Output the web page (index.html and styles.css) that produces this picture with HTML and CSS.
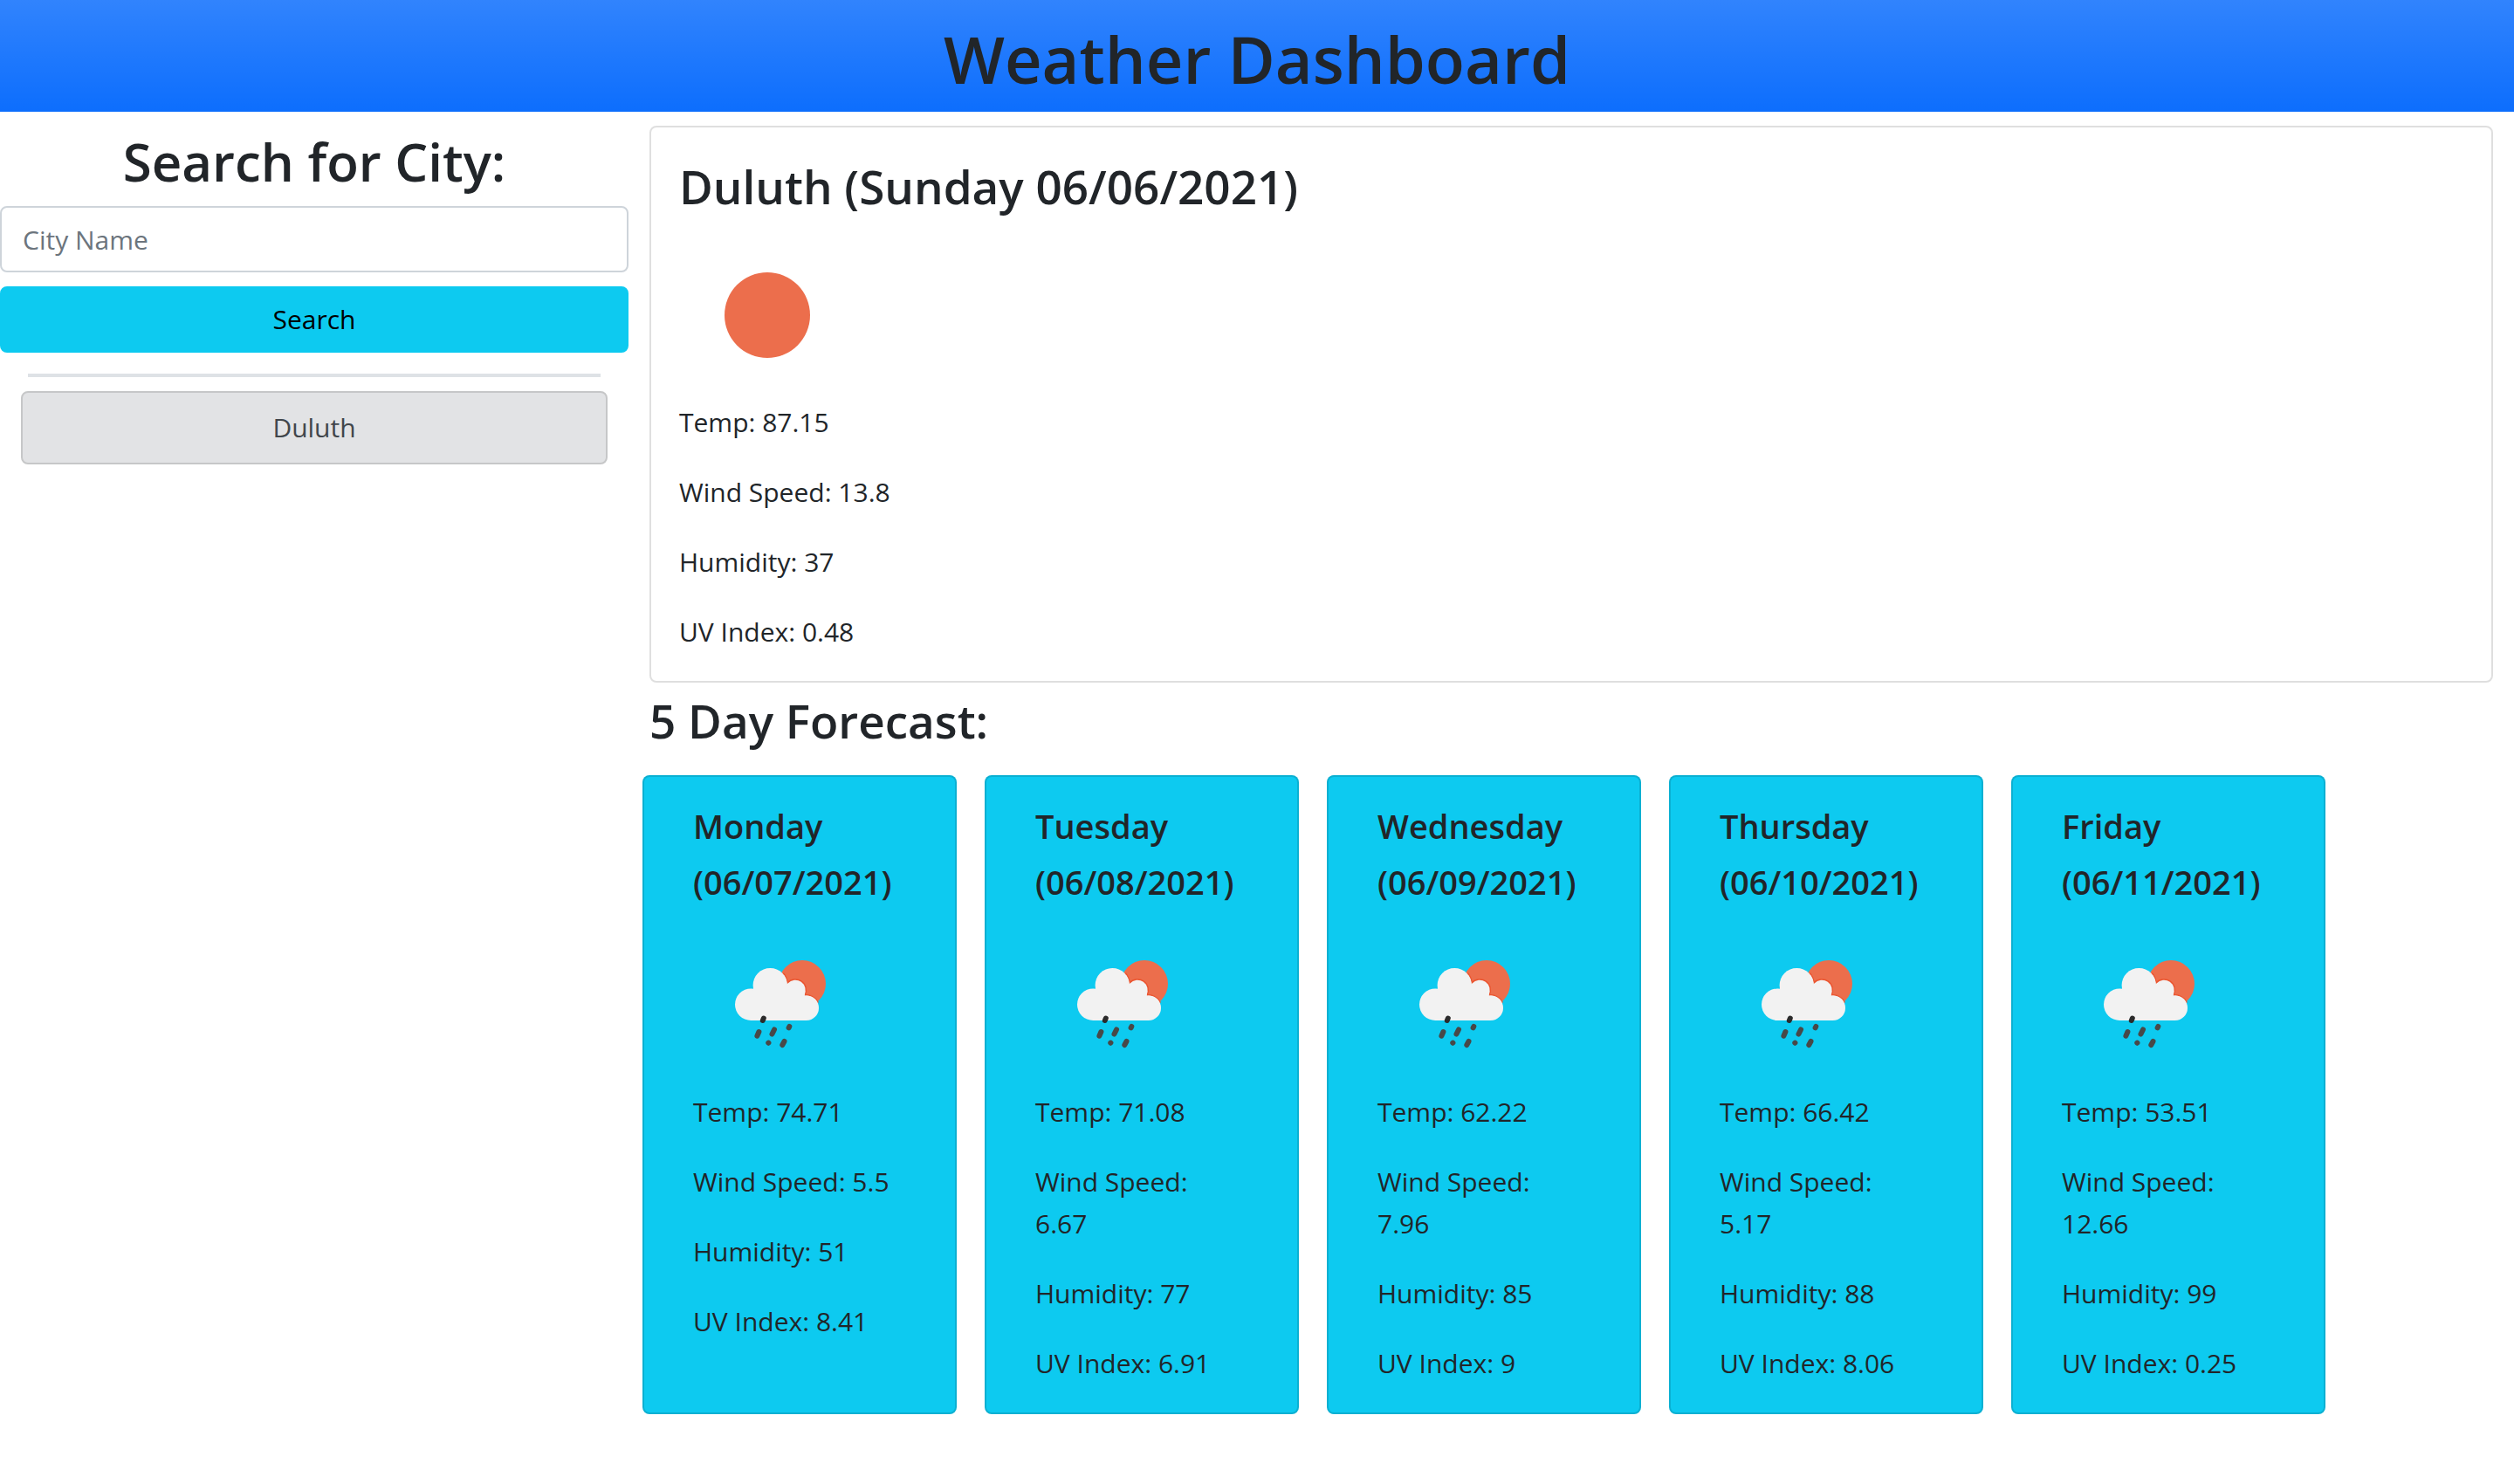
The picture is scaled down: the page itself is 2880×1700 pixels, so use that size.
FILE: index.html
```html
<!DOCTYPE html>
<html lang="en">
<head>
<meta charset="utf-8">
<meta name="viewport" content="width=device-width, initial-scale=1">
<title>Weather Dashboard</title>
<link rel="stylesheet" href="styles.css">
</head>
<body>
<svg class="sprite" aria-hidden="true">
  <symbol id="clear" viewBox="0 0 200 200">
    <circle cx="101" cy="101" r="49" fill="#ec6e4c"/>
  </symbol>
  <symbol id="rain" viewBox="0 0 200 200">
    <circle cx="125" cy="77" r="27" fill="#ec6e4c"/>
    <g fill="#f2f2f2">
      <g stroke="#eb5530" stroke-width="1.5">
        <path d="M104 65.500A19.700 19.700 0 0 1 108 76A12.300 12.300 0 0 1 128 90A14.500 14.500 0 0 1 143 98L120 110L92 88Z"/>
      </g>
      <circle cx="66.300" cy="100.700" r="18.300"/>
      <circle cx="88.300" cy="78.700" r="19.700"/>
      <circle cx="116" cy="86.700" r="12.200"/>
      <circle cx="129.700" cy="104.700" r="14.300"/>
      <path d="M66 119V86L88 76L116 82L130 92V119Z"/>
    </g>
    <g stroke="#484848" stroke-width="6" stroke-linecap="round">
      <path d="M79.800 119L80.800 116.500" stroke="#2b2b2b"/>
      <path d="M73.400 136.700L75.400 132"/>
      <path d="M90.500 134.500L93 129.500"/>
      <path d="M109.600 127.400L110.300 126"/>
      <path d="M86.300 144.700L86.400 144.600"/>
      <path d="M102.300 147L104.500 143"/>
    </g>
  </symbol>
</svg>

<header class="header">
  <h1 class="header-title">Weather Dashboard</h1>
</header>

<main class="layout">
  <aside class="sidebar">
    <form class="search">
      <h2 class="search-title"><label for="city">Search for City:</label></h2>
      <input class="search-input" id="city" type="text" placeholder="City Name">
      <button class="search-button" type="button">Search</button>
    </form>
    <hr class="divider">
    <div class="history">
      <button class="history-button" type="button">Duluth</button>
    </div>
  </aside>

  <div class="content">
    <section class="current">
      <h3 class="section-title">Duluth (Sunday 06/06/2021)</h3>
      <svg class="icon" role="img" aria-label="Clear sky"><use href="#clear"/></svg>
      <div class="stats">
        <p>Temp: 87.15</p>
        <p>Wind Speed: 13.8</p>
        <p>Humidity: 37</p>
        <p>UV Index: 0.48</p>
      </div>
    </section>

    <h3 class="section-title forecast-title">5 Day Forecast:</h3>
    <section class="forecast">
      <article class="day">
        <h4 class="day-title">Monday<br>(06/07/2021)</h4>
        <svg class="icon" role="img" aria-label="Rain"><use href="#rain"/></svg>
        <div class="stats">
          <p>Temp: 74.71</p>
          <p>Wind Speed: 5.5</p>
          <p>Humidity: 51</p>
          <p>UV Index: 8.41</p>
        </div>
      </article>
      <article class="day">
        <h4 class="day-title">Tuesday<br>(06/08/2021)</h4>
        <svg class="icon" role="img" aria-label="Rain"><use href="#rain"/></svg>
        <div class="stats">
          <p>Temp: 71.08</p>
          <p>Wind Speed: 6.67</p>
          <p>Humidity: 77</p>
          <p>UV Index: 6.91</p>
        </div>
      </article>
      <article class="day">
        <h4 class="day-title">Wednesday<br>(06/09/2021)</h4>
        <svg class="icon" role="img" aria-label="Rain"><use href="#rain"/></svg>
        <div class="stats">
          <p>Temp: 62.22</p>
          <p>Wind Speed: 7.96</p>
          <p>Humidity: 85</p>
          <p>UV Index: 9</p>
        </div>
      </article>
      <article class="day">
        <h4 class="day-title">Thursday<br>(06/10/2021)</h4>
        <svg class="icon" role="img" aria-label="Rain"><use href="#rain"/></svg>
        <div class="stats">
          <p>Temp: 66.42</p>
          <p>Wind Speed: 5.17</p>
          <p>Humidity: 88</p>
          <p>UV Index: 8.06</p>
        </div>
      </article>
      <article class="day">
        <h4 class="day-title">Friday<br>(06/11/2021)</h4>
        <svg class="icon" role="img" aria-label="Rain"><use href="#rain"/></svg>
        <div class="stats">
          <p>Temp: 53.51</p>
          <p>Wind Speed: 12.66</p>
          <p>Humidity: 99</p>
          <p>UV Index: 0.25</p>
        </div>
      </article>
    </section>
  </div>
</main>
</body>
</html>
```

FILE: styles.css
```css
*,
*::before,
*::after {
  box-sizing: border-box;
}

body {
  margin: 0;
  background: #fff;
  color: #212529;
  font-family: "Segoe UI", "Open Sans", "Noto Sans", sans-serif;
  font-size: 30px;
  line-height: 48px;
}

h1,
h2,
h3,
h4,
p {
  margin: 0;
}

h1,
h2,
h3,
h4 {
  font-weight: 600;
}

input,
button {
  font: inherit;
}

.sprite {
  position: absolute;
  width: 0;
  height: 0;
}

.header {
  padding: 20px 16px 12px;
  background: #0d6efd linear-gradient(180deg, rgba(255, 255, 255, 0.15), rgba(255, 255, 255, 0));
  text-align: center;
}

.header-title {
  font-size: 74px;
  line-height: 96px;
}

.layout {
  display: grid;
  grid-template-columns: 1fr 3fr;
  padding-top: 16px;
}

.search {
  display: flex;
  flex-direction: column;
}

.search-title {
  margin-bottom: 10px;
  font-size: 60px;
  line-height: 82px;
  text-align: center;
}

.search-input {
  width: 100%;
  height: 76px;
  margin-bottom: 16px;
  padding: 12px 24px;
  border: 2px solid #ced4da;
  border-radius: 8px;
  background: #fff;
  color: #212529;
}

.search-input::placeholder {
  color: #6c757d;
  opacity: 1;
}

.search-button {
  height: 76px;
  border: 2px solid #0dcaf0;
  border-radius: 8px;
  background: #0dcaf0;
  color: #000;
}

.divider {
  margin: 24px 32px 16px;
  border: 0;
  border-top: 4px solid #dee2e6;
}

.history {
  display: flex;
  flex-direction: column;
  padding: 0 24px;
}

.history-button {
  padding: 16px;
  border: 2px solid #c6c7c8;
  border-radius: 8px;
  background: #e2e3e5;
  color: #41464b;
}

.sidebar {
  min-width: 0;
}

.content {
  min-width: 0;
  padding: 0 24px 32px;
}

.current {
  padding: 32px;
  border: 2px solid rgba(0, 0, 0, 0.125);
  border-radius: 8px;
}

.section-title {
  font-size: 53px;
  line-height: 72px;
}

.current .section-title {
  margin-bottom: 10px;
}

.icon {
  display: block;
  width: 200px;
  height: 200px;
}

.stats {
  display: grid;
  gap: 32px;
}

.forecast-title {
  margin: 8px 0 26px;
}

.forecast {
  display: flex;
  flex-wrap: wrap;
  gap: 32px;
  margin-left: -8px;
}

.day {
  width: 360px;
  padding: 24px 64px 32px 56px;
  border: 2px solid rgba(0, 0, 0, 0.125);
  border-radius: 8px;
  background: #0dcaf0;
}

.day-title {
  margin-bottom: 8px;
  font-size: 38px;
  line-height: 64px;
}
```
